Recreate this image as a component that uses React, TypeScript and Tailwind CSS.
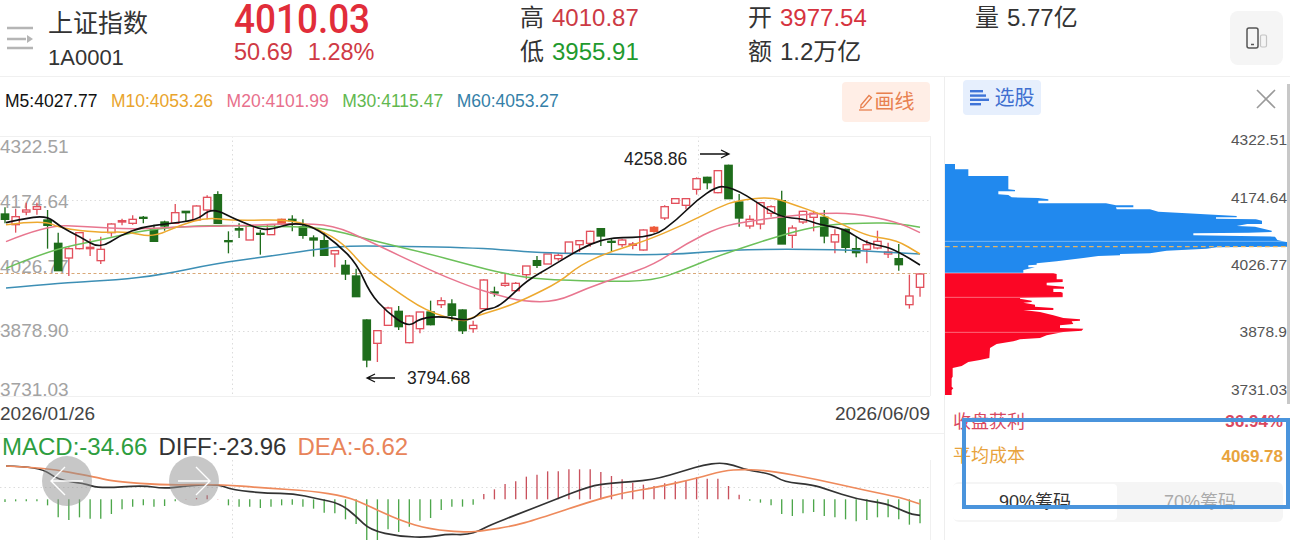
import * as React from 'react';

type Pt = [number, number];
type Candle = [number, number, number, number, 'r' | 'g' | 'o'];

// all chart numbers are in 3x space, the <g> scales them back down
const candles: Candle[] = [
  [232, 280, 252, 268, 'g'], [236, 308, 260, 284, 'r'], [218, 256, 240, 246, 'r'], [218, 254, 230, 238, 'r'],
  [240, 356, 270, 286, 'g'], [308, 422, 340, 422, 'g'], [352, 438, 356, 384, 'r'], [308, 358, 308, 356, 'r'],
  [326, 378, 352, 356, 'r'], [320, 402, 358, 392, 'r'], [280, 320, 282, 308, 'r'], [266, 286, 272, 276, 'r'],
  [256, 284, 268, 280, 'r'], [258, 280, 262, 265, 'g'], [284, 336, 298, 334, 'g'], [272, 302, 276, 288, 'g'],
  [222, 282, 248, 280, 'r'], [244, 276, 244, 248, 'g'], [226, 272, 228, 270, 'r'], [196, 268, 202, 240, 'r'],
  [184, 282, 194, 280, 'g'], [304, 370, 332, 335, 'g'], [280, 324, 296, 300, 'g'], [282, 330, 288, 330, 'r'],
  [300, 374, 310, 313, 'g'], [284, 314, 284, 314, 'r'], [266, 284, 268, 282, 'o'], [256, 304, 268, 272, 'g'],
  [268, 326, 290, 316, 'g'], [316, 380, 324, 330, 'g'], [306, 376, 332, 376, 'g'], [360, 412, 362, 372, 'r'],
  [390, 450, 406, 432, 'g'], [416, 500, 438, 500, 'g'], [568, 712, 570, 690, 'g'], [602, 696, 602, 640, 'r'],
  [530, 588, 534, 586, 'r'], [528, 600, 544, 590, 'g'], [556, 640, 558, 638, 'r'], [546, 610, 546, 596, 'r'],
  [512, 586, 546, 584, 'g'], [502, 534, 512, 524, 'r'], [508, 574, 522, 556, 'g'], [538, 612, 540, 602, 'g'],
  [572, 608, 586, 596, 'r'], [448, 536, 450, 536, 'r'], [470, 500, 486, 489, 'g'], [430, 470, 460, 466, 'r'],
  [456, 486, 460, 482, 'r'], [408, 448, 408, 434, 'r'], [378, 414, 392, 406, 'g'], [372, 402, 372, 402, 'r'],
  [370, 392, 376, 386, 'r'], [336, 372, 336, 370, 'r'], [330, 366, 332, 344, 'r'], [302, 350, 304, 340, 'r'],
  [294, 348, 296, 318, 'g'], [324, 364, 334, 337, 'g'], [326, 352, 330, 344, 'r'], [336, 358, 342, 346, 'r'],
  [298, 362, 300, 360, 'r'], [288, 308, 292, 304, 'o'], [226, 270, 230, 264, 'r'], [204, 222, 206, 220, 'r'],
  [204, 238, 206, 226, 'r'], [142, 194, 146, 178, 'r'], [140, 178, 142, 158, 'g'], [120, 190, 122, 188, 'r'],
  [104, 206, 106, 206, 'g'], [192, 290, 216, 264, 'g'], [256, 296, 268, 288, 'r'], [218, 298, 218, 282, 'r'],
  [226, 260, 230, 250, 'r'], [182, 342, 212, 342, 'g'], [286, 354, 294, 316, 'r'], [242, 282, 244, 276, 'r'],
  [242, 304, 250, 262, 'r'], [240, 340, 262, 318, 'g'], [298, 370, 314, 336, 'r'], [296, 368, 298, 352, 'g'],
  [320, 382, 356, 368, 'g'], [330, 400, 344, 358, 'r'], [302, 358, 334, 354, 'r'], [338, 384, 366, 372, 'r'],
  [342, 422, 386, 404, 'g'], [434, 536, 498, 524, 'r'], [432, 500, 432, 472, 'r'],
];

const macdBars = [
  306, 304, 304, 304, 316, 352, 360, 352, 356, 356, 342, 328, 320, 316, 320, 318, 304, 297, 294, 286, 297, 316, 320,
  320, 324, 320, 316, 314, 320, 326, 338, 340, 358, 372, 422, 422, 388, 396, 380, 362, 354, 330, 320, 320, 314, 282,
  268, 252, 244, 230, 224, 214, 214, 208, 208, 208, 216, 228, 238, 248, 254, 258, 250, 244, 240, 232, 236, 236, 258,
  284, 302, 308, 316, 342, 348, 340, 336, 348, 352, 358, 364, 360, 352, 352, 358, 374, 370,
];

const shift = (pts: Pt[]): Pt[] => pts.map(([x, y]) => [x + 1410, y]);

const maLines: { color: string; pts: Pt[] }[] = [
  {
    color: '#3d8fb5',
    pts: [[18, 474], [200, 458], [350, 450], [480, 435], [650, 400], [800, 380], [1000, 350], [1100, 347], [1440, 353],
      ...shift([[200, 368], [480, 375], [640, 372], [800, 358], [1100, 358], [1350, 372]])],
  },
  {
    color: '#6cc05a',
    pts: [[18, 415], [150, 360], [300, 330], [440, 298], [620, 285], [800, 290], [960, 290], [1110, 330], [1300, 375], [1410, 405],
      ...shift([[100, 430], [200, 447], [400, 455], [550, 452], [640, 420], [750, 375], [950, 310], [1060, 285], [1200, 278], [1280, 280], [1350, 292]])],
  },
  {
    color: '#e8768f',
    pts: [[18, 335], [140, 285], [260, 290], [400, 298], [560, 290], [700, 288], [880, 280], [1000, 285], [1100, 330], [1300, 425], [1410, 470],
      ...shift([[80, 495], [160, 515], [260, 515], [350, 475], [450, 440], [550, 405], [650, 340], [750, 290], [830, 275], [950, 258], [1050, 250], [1150, 250], [1280, 275], [1350, 308]])],
  },
  {
    color: '#eda92f',
    pts: [[18, 284], [130, 270], [180, 295], [300, 308], [380, 305], [460, 322], [540, 285], [620, 262], [700, 272], [880, 268], [960, 300], [1030, 340], [1100, 420], [1170, 470], [1280, 545], [1390, 575], [1410, 565],
      ...shift([[60, 545], [110, 530], [170, 505], [270, 455], [330, 405], [420, 365], [520, 335], [640, 285], [750, 230], [800, 212], [900, 200], [960, 220], [1060, 255], [1130, 290], [1200, 320], [1280, 330], [1350, 372]])],
  },
  {
    color: '#111111',
    pts: [[18, 278], [60, 268], [140, 256], [180, 290], [240, 320], [300, 356], [360, 316], [430, 290], [500, 282], [590, 270], [625, 242], [655, 242], [700, 265], [780, 298], [815, 298], [880, 278], [940, 290], [1010, 340], [1070, 400], [1110, 490], [1160, 545], [1225, 592], [1260, 565], [1330, 558], [1410, 575],
      ...shift([[40, 538], [75, 535], [110, 510], [170, 452], [240, 412], [300, 375], [360, 342], [425, 322], [550, 322], [620, 270], [680, 210], [740, 170], [770, 170], [810, 185], [850, 210], [930, 262], [1000, 266], [1050, 285], [1120, 295], [1190, 340], [1250, 350], [1290, 368], [1350, 405]])],
  },
];

const macdBlack: Pt[] = [[18, 198], [120, 200], [175, 240], [250, 250], [300, 265], [430, 256], [490, 266], [560, 258], [650, 252], [700, 270], [800, 280], [880, 280], [950, 296], [1020, 310], [1070, 350], [1110, 390], [1200, 410], [1290, 412], [1340, 402], [1400, 405], [1440, 392],
  ...shift([[60, 375], [150, 340], [240, 305], [360, 258], [420, 250], [550, 240], [650, 210], [700, 195], [750, 188], [790, 195], [830, 210], [905, 222], [940, 245], [1030, 255], [1070, 268], [1160, 298], [1250, 310], [1320, 342], [1350, 346]])];

const macdOrange: Pt[] = [[18, 198], [130, 202], [290, 232], [340, 244], [500, 256], [650, 252], [800, 265], [930, 272], [1040, 290], [1100, 315], [1200, 362], [1290, 388], [1400, 397], [1450, 392],
  ...shift([[130, 378], [200, 358], [370, 302], [460, 278], [560, 262], [680, 235], [760, 212], [820, 208], [900, 212], [1040, 238], [1190, 272], [1290, 292], [1350, 312]])];

const blueProfile: Pt[] = [[15, 102], [45, 102], [45, 118], [85, 118], [85, 138], [205, 138], [205, 178], [225, 180], [225, 184], [175, 184], [175, 193], [205, 195], [215, 202], [295, 204], [325, 208], [325, 212], [295, 212], [295, 220], [498, 220], [528, 226], [580, 226], [580, 232], [528, 232], [530, 238], [630, 238], [655, 245], [740, 250], [890, 258], [890, 262], [828, 262], [828, 266], [948, 268], [966, 272], [966, 282], [922, 282], [890, 288], [945, 290], [995, 302], [995, 306], [925, 308], [760, 310], [760, 316], [1005, 320], [1012, 330], [1050, 338], [1050, 350], [830, 352], [800, 356], [680, 362], [630, 370], [540, 372], [540, 376], [475, 378], [430, 384], [350, 394], [290, 400], [290, 404], [265, 406], [265, 412], [285, 412], [250, 420], [250, 428], [15, 428]];

const redProfile: Pt[] = [[15, 430], [340, 430], [350, 432], [350, 448], [368, 448], [368, 456], [320, 458], [320, 466], [372, 470], [372, 476], [340, 476], [340, 486], [362, 486], [368, 488], [368, 502], [240, 504], [240, 506], [275, 512], [275, 516], [250, 518], [285, 524], [285, 530], [340, 534], [340, 540], [250, 540], [300, 546], [340, 556], [370, 564], [420, 568], [420, 572], [395, 574], [400, 582], [360, 586], [360, 594], [430, 596], [425, 602], [370, 606], [320, 616], [300, 624], [240, 628], [220, 634], [170, 642], [150, 654], [148, 684], [120, 690], [85, 696], [65, 708], [38, 714], [38, 740], [35, 745], [35, 770], [40, 775], [35, 780], [35, 795], [15, 795]];

const poly = (pts: Pt[]) => pts.map((p) => p.join(',')).join(' ');

function smooth(pts: Pt[]) {
  let d = `M${pts[0][0]} ${pts[0][1]}`;
  for (let i = 1; i < pts.length - 1; i++) {
    const mx = (pts[i][0] + pts[i + 1][0]) / 2;
    const my = (pts[i][1] + pts[i + 1][1]) / 2;
    d += ` Q${pts[i][0]} ${pts[i][1]} ${mx} ${my}`;
  }
  const last = pts[pts.length - 1];
  return `${d} L${last[0]} ${last[1]}`;
}

const barX = (i: number) => 15 + 31.92 * i;

const axisLeft: [string, number][] = [['4322.51', 153], ['4174.64', 208], ['4026.77', 273], ['3878.90', 337], ['3731.03', 396]];
const axisRight: [string, number][] = [['4322.51', 145], ['4174.64', 203], ['4026.77', 270], ['3878.9', 337], ['3731.03', 395]];

function KChart() {
  return (
    <svg className="block h-[260px] w-[944px] overflow-visible" viewBox="0 136 944 260">
      <g stroke="#dcdcdc" strokeWidth="1" strokeDasharray="1.5 3">
        <line x1="0" x2="930" y1="200.5" y2="200.5" />
        <line x1="0" x2="930" y1="331.5" y2="331.5" />
        <line x1="232.5" x2="232.5" y1="136" y2="396" />
        <line x1="698.5" x2="698.5" y1="136" y2="396" />
      </g>
      <line x1="0" x2="930" y1="273.5" y2="273.5" stroke="#d9a878" strokeWidth="1" strokeDasharray="3 2.5" />
      <line x1="0" x2="930" y1="136.5" y2="136.5" stroke="#f0f0f0" />
      <line x1="0" x2="930" y1="396.5" y2="396.5" stroke="#f0f0f0" />
      <line x1="930.5" x2="930.5" y1="136" y2="396" stroke="#f0f0f0" />
      {axisLeft.map(([t, y]) => (
        <text key={t} x="0" y={y} fontSize="19" fill="#a3a3a3">{t}</text>
      ))}
      <g transform="translate(0 130) scale(0.33333)">
        {candles.map(([wt, wb, bt, bb, type], i) => {
          const x = barX(i);
          const color = type === 'g' ? '#1f6d1c' : type === 'o' ? '#ee5a3a' : '#e2505c';
          return (
            <g key={i}>
              <line x1={x} x2={x} y1={wt} y2={wb} stroke={color} strokeWidth="4" />
              <rect
                x={x - 11}
                y={bt}
                width="22"
                height={Math.max(bb - bt, 3)}
                fill={type === 'r' ? '#ffffff' : color}
                stroke={color}
                strokeWidth="4"
              />
            </g>
          );
        })}
        {maLines.map((l) => (
          <path key={l.color} d={smooth(l.pts)} fill="none" stroke={l.color} strokeWidth={l.color === '#111111' ? 5 : 4.5} strokeLinejoin="round" />
        ))}
      </g>
      <text x="624" y="165" fontSize="17.5" fill="#222">4258.86</text>
      <path d="M700 154 H728 M721 150 L729 154 L721 158" fill="none" stroke="#111" strokeWidth="1.3" />
      <text x="407" y="384" fontSize="17.5" fill="#222">3794.68</text>
      <path d="M395 378 H367 M375 374 L367 378 L375 382" fill="none" stroke="#111" strokeWidth="1.3" />
    </svg>
  );
}

function MacdChart() {
  return (
    <svg className="block h-[80px] w-[944px]" viewBox="0 460 944 80">
      <g stroke="#dcdcdc" strokeWidth="1" strokeDasharray="1.5 3">
        <line x1="0" x2="930" y1="487.5" y2="487.5" />
        <line x1="232.5" x2="232.5" y1="460" y2="540" />
        <line x1="698.5" x2="698.5" y1="460" y2="540" />
      </g>
      <line x1="930.5" x2="930.5" y1="460" y2="540" stroke="#f0f0f0" />
      <g transform="translate(0 400) scale(0.33333)">
        {macdBars.map((y, i) => (
          <line
            key={i}
            x1={barX(i)}
            x2={barX(i)}
            y1="298"
            y2={y}
            stroke={y < 298 ? '#c9505c' : '#4ca64a'}
            strokeWidth="4"
          />
        ))}
        <path d={smooth(macdBlack)} fill="none" stroke="#333333" strokeWidth="5" />
        <path d={smooth(macdOrange)} fill="none" stroke="#ee8a5c" strokeWidth="5" />
      </g>
    </svg>
  );
}

function ChipProfile() {
  return (
    <svg className="block h-[270px] w-[345px]" viewBox="945 130 345 270">
      <g transform="translate(940 130) scale(0.33333)">
        <polygon points={poly(blueProfile)} fill="#2189ee" />
        <polygon points={poly(redProfile)} fill="#fb0625" />
        <line x1="15" x2="1050" y1="334" y2="334" stroke="#ffffff" strokeOpacity="0.6" strokeWidth="2" />
        <line x1="15" x2="1050" y1="350" y2="350" stroke="#e5b565" strokeWidth="4" strokeDasharray="14 10" />
        <line x1="15" x2="500" y1="502" y2="502" stroke="#ffffff" strokeOpacity="0.6" strokeWidth="2" />
        <line x1="15" x2="500" y1="607" y2="607" stroke="#ffffff" strokeOpacity="0.6" strokeWidth="2" />
      </g>
      {axisRight.map(([t, y]) => (
        <text key={t} x="1287" y={y} textAnchor="end" fontSize="15.5" fill="#555">{t}</text>
      ))}
    </svg>
  );
}

function NavCircle({ dir }: { dir: 'left' | 'right' }) {
  return (
    <div className={`absolute top-[23px] flex h-[50px] w-[50px] items-center justify-center rounded-full bg-[#8f8f8f]/50 ${dir === 'left' ? 'left-[42px]' : 'left-[169px]'}`}>
      <svg width="36" height="32" viewBox="0 0 36 32" fill="none" stroke="#ffffff" strokeWidth="1.4">
        {dir === 'left' ? <path d="M34 16 H2 M16 2 L2 16 L16 30" /> : <path d="M2 16 H34 M20 2 L34 16 L20 30" />}
      </svg>
    </div>
  );
}

function Quote({ label, value, color }: { label: string; value: string; color: string }) {
  return (
    <div className="flex items-center gap-[8px] text-[24px] leading-[34px] text-[#333]">
      <span>{label}</span>
      <span className={color}>{value}</span>
    </div>
  );
}

export default function App() {
  return (
    <div className="relative h-[540px] w-[1290px] overflow-hidden bg-white font-['Liberation_Sans','Noto_Sans_CJK_SC',sans-serif]">
      {/* 顶部行情 */}
      <header className="flex h-[77px] border-b border-[#f0f0f0]">
        <div className="flex w-[48px] items-start pl-[6px] pt-[26px]">
          <svg width="28" height="24" viewBox="0 0 28 24" fill="none" stroke="#b5b5b5" strokeWidth="2.5">
            <path d="M1 2 H27 M1 13 H20 M1 22 H27" />
            <path d="M21 9 L27 13 L21 17 Z" fill="#b5b5b5" stroke="none" />
          </svg>
        </div>
        <div className="w-[186px] pt-[5px] text-[#333]">
          <div className="text-[25px] leading-[36px]">上证指数</div>
          <div className="mt-[1px] text-[22px] leading-[32px]">1A0001</div>
        </div>
        <div className="w-[286px] text-[#e12d3a]">
          <div className="h-[38px] origin-left scale-x-90 font-['Roboto',sans-serif] text-[41px] font-medium leading-[38px]">4010.03</div>
          <div className="mt-[2px] flex gap-[15px] text-[23.5px] leading-[24px] text-[#cf3a45]">
            <span>50.69</span>
            <span>1.28%</span>
          </div>
        </div>
        <div className="w-[228px] pt-[1px]">
          <Quote label="高" value="4010.87" color="text-[#cc3a45]" />
          <Quote label="低" value="3955.91" color="text-[#1f9a2e]" />
        </div>
        <div className="w-[227px] pt-[1px]">
          <Quote label="开" value="3977.54" color="text-[#d6333f]" />
          <Quote label="额" value="1.2万亿" color="text-[#333]" />
        </div>
        <div className="flex-1 pt-[1px]">
          <Quote label="量" value="5.77亿" color="text-[#333]" />
        </div>
        <div className="mr-[7px] mt-[11px] flex h-[54px] w-[53px] items-center justify-center rounded-lg bg-[#f5f5f5]">
          <svg width="22" height="22" viewBox="0 0 22 22" fill="none">
            <rect x="1" y="1" width="11" height="20" rx="2" stroke="#555" strokeWidth="1.5" />
            <path d="M5 17.5 H8" stroke="#555" strokeWidth="1.5" />
            <rect x="14.5" y="8" width="6" height="12" rx="1.5" stroke="#c4c4c4" strokeWidth="1.2" />
          </svg>
        </div>
      </header>

      <div className="flex">
        <main className="w-[945px] border-r border-[#eeeeee]">
          {/* 均线 */}
          <div className="flex h-[59px] items-center justify-between pl-[5px] pr-[14px]">
            <div className="mt-[-10px] flex gap-[13.5px] text-[17.5px]">
              <span className="text-[#111]">M5:4027.77</span>
              <span className="text-[#e9a42c]">M10:4053.26</span>
              <span className="text-[#e8708c]">M20:4101.99</span>
              <span className="text-[#62b84f]">M30:4115.47</span>
              <span className="text-[#357fa8]">M60:4053.27</span>
            </div>
            <button className="mt-[-9px] flex h-[40px] w-[88px] items-center justify-center gap-[1px] rounded bg-[#ffeee6] text-[20px] text-[#e8804f]">
              <svg width="16" height="18" viewBox="0 0 16 18" fill="none" stroke="#e8804f" strokeWidth="1.3">
                <path d="M3 12 L11 2.5 L13.5 4.5 L5.5 14 L2.8 14.8 Z" />
                <path d="M1 17 H14" />
              </svg>
              画线
            </button>
          </div>
          <KChart />
          <div className="flex h-[37px] items-center justify-between pr-[14px] text-[19px] text-[#444]">
            <span>2026/01/26</span>
            <span>2026/06/09</span>
          </div>
          {/* MACD */}
          <div className="relative">
            <div className="flex h-[27px] items-center gap-[11px] border-t border-[#f0f0f0] pl-[2px] text-[24px]">
              <span className="text-[#2e9e3f]">MACD:-34.66</span>
              <span className="text-[#333]">DIFF:-23.96</span>
              <span className="text-[#e8845a]">DEA:-6.62</span>
            </div>
            <MacdChart />
            <NavCircle dir="left" />
            <NavCircle dir="right" />
          </div>
        </main>

        {/* 筹码 */}
        <aside className="flex-1">
          <div className="flex h-[53px] items-start justify-between pl-[18px] pr-[13px] pt-[3px]">
            <div className="flex h-[35px] w-[78px] items-center justify-center gap-[5px] rounded bg-[#e6effd] text-[20px] text-[#3f6fd0]">
              <svg width="20" height="18" viewBox="0 0 20 18" fill="#3f74d8">
                <rect x="0" y="1" width="13" height="2.4" />
                <rect x="0" y="5.4" width="16" height="2.4" />
                <rect x="0" y="9.6" width="19" height="2.4" />
                <rect x="0" y="14" width="11" height="2.4" />
              </svg>
              选股
            </div>
            <svg className="mt-[9px]" width="22" height="20" viewBox="0 0 22 20" fill="none" stroke="#9a9a9a" strokeWidth="1.6">
              <path d="M2 1 L20 19 M20 1 L2 19" />
            </svg>
          </div>
          <ChipProfile />
          <div className="pl-[8px] pr-[7px]">
            <div className="flex h-[34px] items-center justify-between pt-[10px] text-[#d9485f]">
              <span className="text-[18px]">收盘获利</span>
              <span className="text-[17px] font-bold">36.94%</span>
            </div>
            <div className="flex h-[35px] items-center justify-between pt-[10px] text-[#e8a33d]">
              <span className="text-[18px]">平均成本</span>
              <span className="text-[17px] font-bold">4069.78</span>
            </div>
            <div className="mt-[13px] flex h-[40px] rounded-md bg-[#f5f5f5] py-[2px] text-[18px]">
              <div className="flex w-[164px] items-center justify-center rounded bg-white text-[#333]">90%筹码</div>
              <div className="flex flex-1 items-center justify-center text-[#aaaaaa]">70%筹码</div>
            </div>
          </div>
        </aside>
      </div>

      {/* 截图上的标注框和滚动条 */}
      <div className="absolute bottom-[136px] right-0 top-[84px] w-[3px] bg-[#c8c8c8]" />
      <div className="absolute left-[962px] top-[418px] h-[91px] w-[328px] border-[4px] border-[#4a94dc]" />
    </div>
  );
}
